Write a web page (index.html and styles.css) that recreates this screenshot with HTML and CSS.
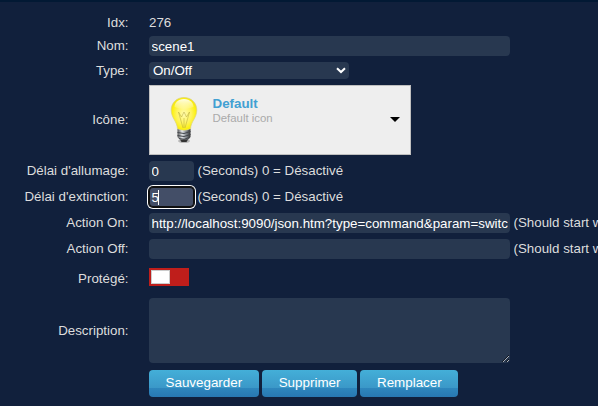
FILE: index.html
```html
<!DOCTYPE html>
<html lang="fr">
<head>
<meta charset="utf-8">
<title>Default</title>
<link rel="stylesheet" href="styles.css">
</head>
<body>
<form class="form">
  <span class="label low">Idx:</span>
  <div class="value low">276</div>

  <span class="label">Nom:</span>
  <div class="value"><input class="field wide" type="text" value="scene1"></div>

  <span class="label">Type:</span>
  <div class="value"><div class="field select"><span>On/Off</span>
    <svg class="chevron" width="10" height="7" viewBox="0 0 10 7"><path d="M1 1.2 5 5 9 1.2" fill="none" stroke="#fff" stroke-width="2"/></svg></div></div>

  <span class="label">Icône:</span>
  <div class="value"><div class="picker">
    <svg class="bulb" width="28" height="48" viewBox="0 0 28 48">
      <defs>
        <radialGradient id="glass" cx=".5" cy=".5" r=".58">
          <stop offset="0" stop-color="#fffbb0"/><stop offset=".5" stop-color="#fff45c"/>
          <stop offset=".8" stop-color="#fcf010"/><stop offset="1" stop-color="#e6d62a"/>
        </radialGradient>
        <linearGradient id="shine" x2="0" y2="1"><stop offset="0" stop-color="#fff" stop-opacity=".9"/><stop offset="1" stop-color="#fff" stop-opacity=".1"/></linearGradient>
        <linearGradient id="metal"><stop offset="0" stop-color="#555"/><stop offset=".35" stop-color="#e4e7eb"/><stop offset=".65" stop-color="#888d94"/><stop offset="1" stop-color="#333"/></linearGradient>
      </defs>
      <ellipse cx="14" cy="45" rx="6" ry="2" fill="#b8b8b8"/>
      <path d="M14 1.500C6.500 1.500 1.200 7 1.200 14C1.200 22 7 25 7.500 33Q14 36 20.500 33C21 25 26.800 22 26.800 14C26.800 7 21.500 1.500 14 1.500Z" fill="url(#glass)" stroke="#ddd27a" stroke-width=".7"/>
      <path d="M14 3C8 3 4.500 7 4.500 11Q14 15 23.500 11C23.500 7 20 3 14 3Z" fill="url(#shine)"/>
      <path d="M13 32 8.500 16l3 5 2.500-5 2.500 5 3-5L15 32M14 22v10" fill="none" stroke="#b5a83c" stroke-opacity=".65" stroke-width=".8"/>
      <path d="M7.500 33Q14 36 20.500 33L20.500 41Q18 45 14 45Q10 45 7.500 41Z" fill="url(#metal)"/>
      <path d="M7.500 36.500Q14 39 20.500 35.500M7.500 39.500Q14 42 20.500 38.500M9 42.500Q14 44.500 19.500 41.500" fill="none" stroke="#43474d" stroke-width="1"/>
      <path d="M10 43.500h8L16.500 46h-5Z" fill="#333"/>
    </svg>
    <div class="picker-text"><b>Default</b><small>Default icon</small></div>
    <svg class="arrow" width="10" height="5" viewBox="0 0 10 5"><path d="M0 0h10L5 5Z"/></svg>
  </div></div>

  <span class="label">Délai d'allumage:</span>
  <div class="value"><input class="field short" type="text" value="0"><span>(Seconds) 0 = Désactivé</span></div>

  <span class="label">Délai d'extinction:</span>
  <div class="value"><div class="field short focused"><span>5</span><i class="caret"></i></div><span>(Seconds) 0 = Désactivé</span></div>

  <span class="label">Action On:</span>
  <div class="value"><input class="field wide" type="text" value="http://localhost:9090/json.htm?type=command&amp;param=switchlight"><span class="hint">(Should start with http:// or script://)</span></div>

  <span class="label">Action Off:</span>
  <div class="value"><input class="field wide" type="text"><span class="hint">(Should start with http:// or script://)</span></div>

  <span class="label protect">Protégé:</span>
  <div class="value"><div class="toggle"><i class="knob"></i></div></div>

  <span class="label">Description:</span>
  <div class="value"><textarea class="field area"></textarea></div>

  <span></span>
  <div class="value buttons"><button type="button">Sauvegarder</button><button type="button">Supprimer</button><button type="button">Remplacer</button></div>
</form>
</body>
</html>
```
FILE: styles.css
```css
* { box-sizing: border-box; }
body {
  margin: 0;
  height: 406px;
  overflow: hidden;
  background: #11203c;
  border-top: 2px solid #021934;
  color: #ddd;
  font: 13.33px/18px "Liberation Sans", Arial, sans-serif;
}
.form {
  display: grid;
  grid-template-columns: 128.5px minmax(0, 1fr);
  grid-template-rows: 22px 26px 23px 76px 26px 26px 26px 26px 30px 77px 29px;
  column-gap: 20.5px;
  padding-top: 9px;
}
.label { align-self: center; text-align: right; }
.low { padding-top: 2px; }
.protect { padding-top: 4px; }
.value { display: flex; align-items: center; gap: 3.5px; white-space: nowrap; }
.hint { min-width: 0; overflow: hidden; }
.field {
  display: block;
  flex: none;
  height: 20px;
  margin: 0;
  padding: 1px 2.5px;
  border: 0;
  border-radius: 4px;
  outline: 0;
  background: #283850;
  color: #fff;
  font: inherit;
}
.wide { width: 361px; }
.short { width: 45px; }
.select {
  display: flex;
  align-items: center;
  justify-content: space-between;
  width: 200px;
  height: 17px;
  padding: 0 3px 0 4px;
}
.focused {
  display: flex;
  align-items: center;
  padding-top: 2px;
  background: #434e67;
  border-radius: 4px;
  box-shadow: inset 0 0 0 1px #101010, 0 0 0 1px #101010, 0 0 0 2px #fff;
}
.caret { width: 1px; height: 15px; margin-left: -1px; background: #fff; }
.picker {
  display: flex;
  width: 262px;
  height: 70px;
  padding: 10px 10px 0 20px;
  border: 1px solid #bfbfbf;
  background: #eee;
}
.picker-text { flex: 1; padding-left: 14.5px; line-height: 15px; }
.picker-text b { display: block; color: #41a0d2; }
.picker-text small { display: block; color: #aaa; font-size: 11.4px; line-height: 14px; }
.arrow { margin-top: 21px; }
.toggle { width: 40px; height: 18px; padding: 2px; background: #bf1e1b; }
.knob { display: block; width: 19px; height: 14px; border: 1px solid #ccc; background: #fff; }
.area { width: 361px; height: 65px; resize: both; }
button {
  height: 27px;
  padding: 0 16.5px 2px;
  border: 0;
  border-radius: 4px;
  background: linear-gradient(#44afd8, #3b98c8 66%, #2e86bd 67%, #2878b2);
  color: #fff;
  font: inherit;
  font-size: 13.4px;
}
```
